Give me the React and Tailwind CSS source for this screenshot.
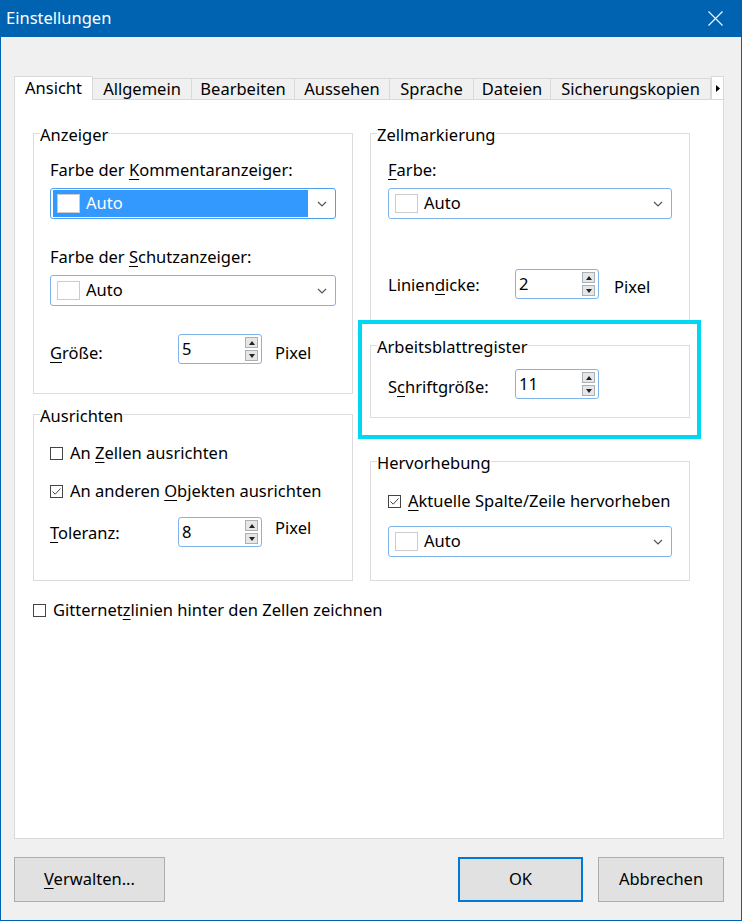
import React from 'react'

const U = ({ children }) => <span className="underline decoration-1 underline-offset-[3px]">{children}</span>

function Chevron() {
  return (
    <svg width="10" height="6" viewBox="0 0 10 6">
      <polyline points="1,1 5,5 9,1" fill="none" stroke="#555" strokeWidth="1.2" />
    </svg>
  )
}

function Combo({ selected }) {
  return (
    <div className={`h-[31px] w-full flex items-stretch py-px px-[2px] rounded-[3px] border bg-white ${selected ? 'border-[#4ca2f0]' : 'border-[#7eb4ea]'}`}>
      <div className={`flex-1 flex items-center pl-[4px] ${selected ? 'bg-[#3399ff] text-white' : ''}`}>
        <div className="w-[23px] h-[19px] border border-[#cccccc] bg-white" />
        <span className="ml-[6px]">Auto</span>
      </div>
      <div className="w-[25px] flex items-center justify-end pr-[6px]">
        <Chevron />
      </div>
    </div>
  )
}

function SpinButton({ up }) {
  return (
    <div className="w-[13px] h-[11px] border border-[#a8b0b8] bg-[#e6e6e6] flex items-center justify-center">
      <svg width="6" height="4" viewBox="0 0 6 4">
        {up ? <polygon points="0,4 6,4 3,0" fill="#222" /> : <polygon points="0,0 6,0 3,4" fill="#222" />}
      </svg>
    </div>
  )
}

function Spin({ value }) {
  return (
    <div className="w-[84px] h-[30px] border border-[#7eb4ea] rounded-[3px] bg-white flex items-center shrink-0">
      <span className="flex-1 pl-[3px] leading-[20px]">{value}</span>
      <div className="flex flex-col gap-[2px] mr-[3px]">
        <SpinButton up />
        <SpinButton />
      </div>
    </div>
  )
}

function Checkbox({ checked, children }) {
  return (
    <div className="flex items-center h-[20px] whitespace-nowrap">
      <div className="w-[13px] h-[13px] border border-[#444] bg-white flex items-center justify-center shrink-0">
        {checked && (
          <svg width="11" height="11" viewBox="0 0 11 11">
            <polyline points="1.5,5.5 4.2,8.2 9.5,2.5" fill="none" stroke="#444" strokeWidth="1" />
          </svg>
        )}
      </div>
      <span className="ml-[7px] leading-[20px]">{children}</span>
    </div>
  )
}

function Group({ title, children, className = '' }) {
  return (
    <fieldset className={`border border-[#dcdcdc] ${className}`}>
      <legend className="ml-[6px] leading-[20px]">
        <span className="relative top-[2px]">{title}</span>
      </legend>
      {children}
    </fieldset>
  )
}

const tabs = [
  ['Ansicht', 'w-[79px]'],
  ['Allgemein', 'w-[99px]'],
  ['Bearbeiten', 'w-[103px]'],
  ['Aussehen', 'w-[95px]'],
  ['Sprache', 'w-[84px]'],
  ['Dateien', 'w-[77px]'],
  ['Sicherungskopien', 'w-[160px]'],
]

export default function App() {
  return (
    <div className="w-[742px] h-[921px] bg-[#f0f0f0] border-x border-b border-[#0063b1] flex flex-col text-[16.5px] text-black font-['Noto_Sans',sans-serif]">
      {/* title bar */}
      <div className="h-[37px] bg-[#0063b1] flex items-center justify-between pl-[5px] pr-[18px] text-white shrink-0">
        <span className="text-[16.5px]">Einstellungen</span>
        <svg width="15" height="15" viewBox="0 0 15 15">
          <path d="M0.5 0.5 L14.5 14.5 M14.5 0.5 L0.5 14.5" stroke="#fff" strokeWidth="1.1" />
        </svg>
      </div>

      <div className="px-[13px] pt-[39px] flex flex-col">
        {/* tabs */}
        <div className="h-[23px] flex items-end">
          {tabs.map(([name, w], i) =>
            i === 0 ? (
              <div key={name} className={`${w} h-[24px] -mb-px relative z-10 bg-white border border-b-0 border-[#d9d9d9] flex items-center justify-center`}>
                {name}
              </div>
            ) : (
              <div key={name} className={`${w} h-[21px] border-t border-r border-[#d9d9d9] bg-[#f0f0f0] flex items-center justify-center`}>
                {name}
              </div>
            )
          )}
          <div className="w-[13px] h-[23px] border border-b-0 border-[#d9d9d9] bg-white flex items-center justify-center">
            <svg width="4" height="7" viewBox="0 0 4 7">
              <polygon points="0,0 4,3.5 0,7" fill="#000" />
            </svg>
          </div>
        </div>

        {/* panel */}
        <div className="relative w-[710px] h-[740px] bg-white border border-[#d9d9d9] flex gap-[17px] pl-[18px] pt-[23px]">
          {/* left column */}
          <div className="w-[320px] flex flex-col">
            <Group title="Anzeiger">
              <div className="px-[16px] pt-[17px] pb-[29px]">
                <div className="leading-[20px]">Farbe der <U>K</U>ommentaranzeiger:</div>
                <div className="mt-[8px]"><Combo selected /></div>
                <div className="mt-[28px] leading-[20px]">Farbe der <U>S</U>chutzanzeiger:</div>
                <div className="mt-[8px]"><Combo /></div>
                <div className="mt-[28px] flex items-start">
                  <span className="w-[128px] mt-[9px] leading-[20px]"><U>G</U>röße:</span>
                  <Spin value="5" />
                  <span className="ml-[13px] mt-[9px] leading-[20px]">Pixel</span>
                </div>
              </div>
            </Group>

            <Group title="Ausrichten" className="mt-[10px]">
              <div className="px-[16px] pt-[19px] pb-[33px]">
                <Checkbox>An <U>Z</U>ellen ausrichten</Checkbox>
                <div className="mt-[18px]">
                  <Checkbox checked>An anderen <U>O</U>bjekten ausrichten</Checkbox>
                </div>
                <div className="mt-[16px] flex items-start">
                  <span className="w-[128px] mt-[6px] leading-[20px]"><U>T</U>oleranz:</span>
                  <Spin value="8" />
                  <span className="ml-[13px] mt-[1px] leading-[20px]">Pixel</span>
                </div>
              </div>
            </Group>

            <div className="mt-[19px]">
              <Checkbox>Gitternet<U>z</U>linien hinter den Zellen zeichnen</Checkbox>
            </div>
          </div>

          {/* right column */}
          <div className="w-[320px] flex flex-col">
            <Group title="Zellmarkierung">
              <div className="px-[17px] pt-[17px] pb-[24px]">
                <div className="leading-[20px]"><U>F</U>arbe:</div>
                <div className="mt-[8px]"><Combo /></div>
                <div className="mt-[50px] flex items-start">
                  <span className="w-[127px] mt-[6px] leading-[20px]">Linien<U>d</U>icke:</span>
                  <Spin value="2" />
                  <span className="ml-[15px] mt-[8px] leading-[20px]">Pixel</span>
                </div>
              </div>
            </Group>

            <Group title="Arbeitsblattregister" className="mt-[11px]">
              <div className="px-[17px] pt-[14px] pb-[18px] flex items-start">
                <span className="w-[127px] mt-[8px] leading-[20px]">S<U>c</U>hriftgröße:</span>
                <Spin value="11" />
              </div>
            </Group>

            <Group title="Hervorhebung" className="mt-[33px]">
              <div className="px-[17px] pt-[20px] pb-[23px]">
                <Checkbox checked><U>A</U>ktuelle Spalte/Zeile hervorheben</Checkbox>
                <div className="mt-[15px]"><Combo /></div>
              </div>
            </Group>
          </div>

          {/* highlight frame */}
          <div className="absolute left-[343px] top-[220px] w-[343px] h-[119px] border-4 border-[#00d7f2]" />
        </div>

        {/* buttons */}
        <div className="mt-[18px] flex w-[710px]">
          <button className="w-[151px] h-[45px] bg-[#e1e1e1] border border-[#adadad]">
            <U>V</U>erwalten...
          </button>
          <button className="ml-auto w-[125px] h-[45px] bg-[#e1e1e1] border-2 border-[#0078d7]">OK</button>
          <button className="ml-[15px] w-[126px] h-[45px] bg-[#e1e1e1] border border-[#adadad]">Abbrechen</button>
        </div>
      </div>
    </div>
  )
}
